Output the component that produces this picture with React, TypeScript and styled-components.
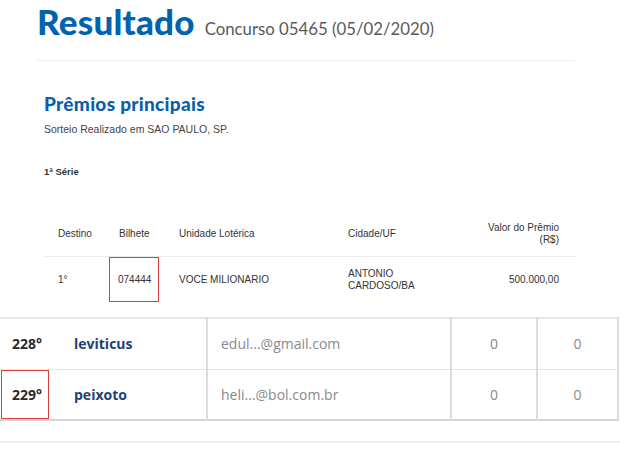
import React from 'react'
import styled, { createGlobalStyle } from 'styled-components'

const GlobalStyle = createGlobalStyle`
  html, body {
    margin: 0;
    padding: 0;
    background: #ffffff;
  }
  body {
    width: 620px;
    height: 471px;
    overflow: hidden;
    font-family: "Liberation Sans", Arial, sans-serif;
  }
`

const Page = styled.div`
  display: flex;
  flex-direction: column;
  width: 620px;
`

const TopSection = styled.section`
  display: flex;
  flex-direction: column;
  padding: 0 45px 0 37px;
  height: 317px;
`

const TitleRow = styled.div`
  display: flex;
  align-items: baseline;
  gap: 10px;
  height: 61px;
  border-bottom: 1px solid #f0f0f0;
  box-sizing: border-box;
`

const Title = styled.h1`
  margin: 0;
  font-family: Lato, "Open Sans", sans-serif;
  font-weight: 900;
  font-size: 35px;
  line-height: 43px;
  letter-spacing: 0.2px;
  color: #0063b0;
`

const Subtitle = styled.span`
  font-family: Lato, "Open Sans", sans-serif;
  font-size: 16.8px;
  color: #5a5a5a;
`

const Block = styled.div`
  display: flex;
  flex-direction: column;
  padding-left: 7px;
`

const SectionTitle = styled.h2`
  margin: 31px 0 0;
  font-family: Lato, "Open Sans", sans-serif;
  font-weight: 900;
  font-size: 19px;
  line-height: 24px;
  letter-spacing: 0.3px;
  color: #0a5fa8;
`

const Note = styled.p`
  margin: 7px 0 0;
  font-size: 10.5px;
  line-height: 12px;
  color: #444;
`

const Series = styled.p`
  margin: 31px 0 0;
  font-size: 9.5px;
  line-height: 12px;
  font-weight: 700;
  color: #333;
`

const PrizeGrid = styled.div`
  display: grid;
  grid-template-columns: 51px 50px 159px 110px 1fr;
  column-gap: 10px;
  margin-top: 33px;
  padding-left: 4px;
  font-size: 10px;
  color: #333;
`

const Cell = styled.div<{ $right?: boolean; $head?: boolean; $marked?: boolean }>`
  display: flex;
  flex-direction: column;
  justify-content: center;
  align-items: ${(p) => (p.$right ? 'flex-end' : 'flex-start')};
  text-align: ${(p) => (p.$right ? 'right' : 'left')};
  padding-right: ${(p) => (p.$right ? '15px' : '0')};
  padding-left: ${(p) => (p.$marked ? '8px' : '9px')};
  height: ${(p) => (p.$head ? '45px' : '45px')};
  line-height: 12px;
  box-sizing: border-box;
  border: 1px solid ${(p) => (p.$marked ? '#d94040' : 'transparent')};
`

const HeadRule = styled.div`
  grid-column: 1 / -1;
  height: 1px;
  background: #ececec;
  margin-left: -4px;
`

const RankTable = styled.table`
  width: 618px;
  table-layout: fixed;
  border-collapse: collapse;
  font-family: "Open Sans", sans-serif;
  font-size: 14px;
  border-top: 2px solid #e6e6e6;
  border-bottom: 2px solid #d4d4d4;
`

const RankRow = styled.tr`
  height: 51px;
  border-bottom: 1px solid #e6e6e6;
  &:last-child {
    border-bottom: none;
  }
`

const PosCell = styled.td<{ $marked?: boolean }>`
  width: 50px;
  padding: 0 0 0 12px;
  box-sizing: border-box;
  font-weight: 700;
  color: #2a2a2a;
  outline: ${(p) => (p.$marked ? '1px solid #d94040' : 'none')};
  outline-offset: -2px;
`

const NameCell = styled.td`
  width: 157px;
  padding-left: 24px;
  box-sizing: border-box;
  font-weight: 700;
  color: #1f3f78;
  border-right: 2px solid #dcdcdc;
`

const MailCell = styled.td`
  width: 244px;
  padding-left: 13px;
  box-sizing: border-box;
  color: #8a8a8a;
  border-right: 2px solid #dcdcdc;
`

const NumCell = styled.td<{ $w: number }>`
  width: ${(p) => p.$w}px;
  box-sizing: border-box;
  text-align: center;
  color: #8a8a8a;
  border-right: 2px solid #dcdcdc;
`

const BottomRule = styled.div`
  height: 2px;
  background: #eeeeee;
  margin-top: 20px;
`

const headers = ['Destino', 'Bilhete', 'Unidade Lotérica', 'Cidade/UF']

const ranks = [
  { pos: '228°', name: 'leviticus', mail: 'edul...@gmail.com', a: 0, b: 0 },
  { pos: '229°', name: 'peixoto', mail: 'heli...@bol.com.br', a: 0, b: 0, marked: true },
]

export default function App() {
  return (
    <Page>
      <GlobalStyle />
      <TopSection>
        <TitleRow>
          <Title>Resultado</Title>
          <Subtitle>Concurso 05465 (05/02/2020)</Subtitle>
        </TitleRow>
        <Block>
          <SectionTitle>Prêmios principais</SectionTitle>
          <Note>Sorteio Realizado em SAO PAULO, SP.</Note>
          <Series>1ª Série</Series>
          <PrizeGrid>
            {headers.map((h) => (
              <Cell key={h} $head>
                {h}
              </Cell>
            ))}
            <Cell $head $right>
              <span>Valor do Prêmio</span>
              <span>(R$)</span>
            </Cell>
            <HeadRule />
            <Cell>1°</Cell>
            <Cell $marked>074444</Cell>
            <Cell>VOCE MILIONARIO</Cell>
            <Cell>
              <span>ANTONIO</span>
              <span>CARDOSO/BA</span>
            </Cell>
            <Cell $right>500.000,00</Cell>
          </PrizeGrid>
        </Block>
      </TopSection>
      <RankTable>
        <tbody>
          {ranks.map((r) => (
            <RankRow key={r.pos}>
              <PosCell $marked={r.marked}>{r.pos}</PosCell>
              <NameCell>{r.name}</NameCell>
              <MailCell>{r.mail}</MailCell>
              <NumCell $w={86}>{r.a}</NumCell>
              <NumCell $w={81}>{r.b}</NumCell>
            </RankRow>
          ))}
        </tbody>
      </RankTable>
      <BottomRule />
    </Page>
  )
}
